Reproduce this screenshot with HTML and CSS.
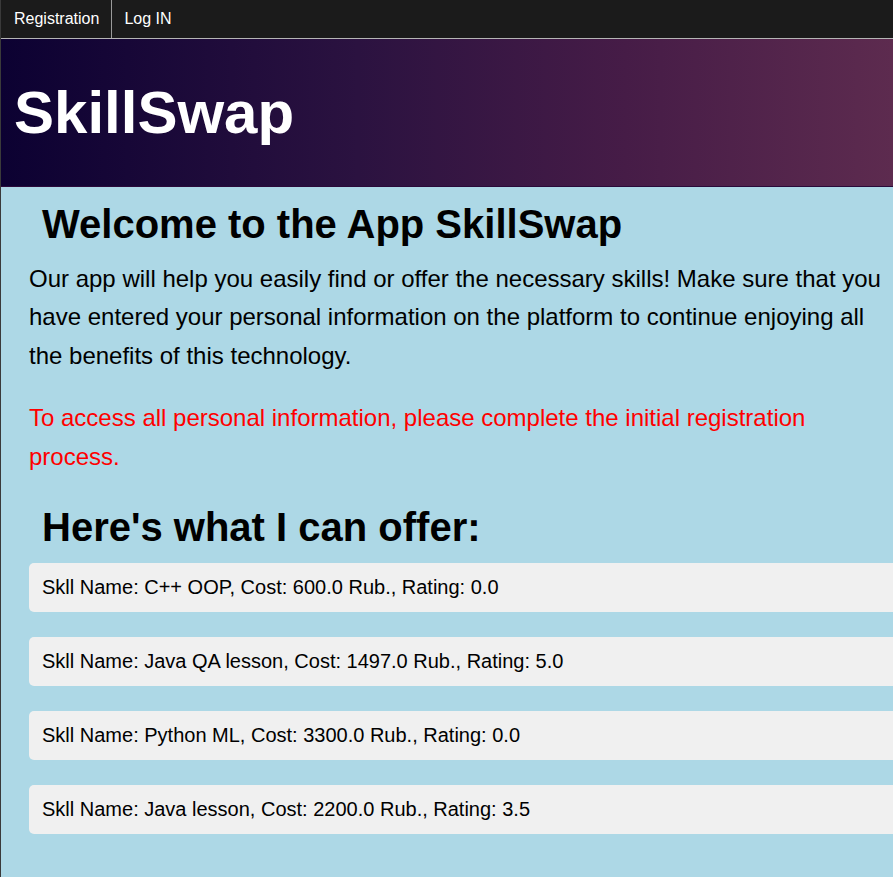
FILE: index.html
```html
<!DOCTYPE html>
<html lang="en">
<head>
<meta charset="utf-8">
<title>SkillSwap</title>
<link rel="stylesheet" href="styles.css">
</head>
<body>
<nav class="topnav">
  <a class="nav-link" href="#">Registration</a>
  <a class="nav-link" href="#">Log IN</a>
</nav>
<header class="hero">
  <div class="brand">SkillSwap</div>
</header>
<main class="content">
  <h1 class="title title-welcome">Welcome to the App SkillSwap</h1>
  <p class="text">Our app will help you easily find or offer the necessary skills! Make sure that you have entered your personal information on the platform to continue enjoying all the benefits of this technology.</p>
  <p class="text text-warn">To access all personal information, please complete the initial registration process.</p>
  <h1 class="title title-offer">Here's what I can offer:</h1>
  <div class="skills">
    <div class="skill">Skll Name: C++ OOP, Cost: 600.0 Rub., Rating: 0.0</div>
    <div class="skill">Skll Name: Java QA lesson, Cost: 1497.0 Rub., Rating: 5.0</div>
    <div class="skill">Skll Name: Python ML, Cost: 3300.0 Rub., Rating: 0.0</div>
    <div class="skill">Skll Name: Java lesson, Cost: 2200.0 Rub., Rating: 3.5</div>
  </div>
</main>
</body>
</html>
```

FILE: styles.css
```css
html {
  background: #add8e6;
  overflow: hidden;
}
body {
  margin: 0;
  border-left: 1px solid #3a3a3a;
  min-height: 877px;
  font-family: "Liberation Sans", Arial, sans-serif;
  color: #000;
  overflow: hidden;
}
.topnav {
  display: flex;
  height: 38px;
  background: #1b1b1b;
  border-bottom: 1px solid #b5b5b5;
}
.nav-link {
  display: flex;
  align-items: center;
  padding: 0 12px;
  color: #fff;
  text-decoration: none;
  font-size: 16px;
}
.nav-link:first-child {
  padding-left: 13px;
  padding-right: 12px;
  border-right: 1px solid #9a9a9a;
}
.hero {
  background: linear-gradient(to right, #0c0132 0%, #2b1240 40%, #461c47 70%, #5d2b4f 100%);
  padding: 39px 13px 39px;
  border-bottom: 1px solid #2a0a3a;
}
.brand {
  color: #fff;
  font-weight: bold;
  font-size: 60px;
  line-height: 69px;
}
.content {
  padding: 0 0 40px 28px;
}
.title {
  font-size: 40px;
  line-height: 46px;
  font-weight: bold;
  padding-left: 13px;
  margin: 0;
}
.title-welcome {
  margin-top: 14px;
  margin-bottom: 13px;
}
.title-offer {
  margin-top: 28px;
  margin-bottom: 13px;
}
.text {
  font-size: 24px;
  line-height: 38.4px;
  margin: 0 0 24px;
}
.text-warn {
  color: #ff0000;
}
.skills {
  display: flex;
  flex-direction: column;
  gap: 25px;
}
.skill {
  width: 100%;
  background: #f0f0f0;
  border-radius: 5px;
  padding: 13px 12px 13px 13px;
  font-size: 20px;
  line-height: 23px;
}
```
